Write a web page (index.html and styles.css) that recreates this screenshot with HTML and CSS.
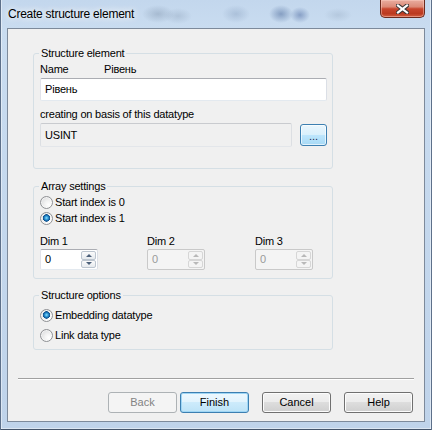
FILE: index.html
```html
<!DOCTYPE html>
<html lang="en">
<head>
<meta charset="utf-8">
<title>Create structure element</title>
<link rel="stylesheet" href="styles.css">
</head>
<body>
<div class="window">
  <div class="titlebar">
    <span class="title">Create structure element</span>
    <button class="close" aria-label="Close">
      <svg width="13" height="10" viewBox="0 0 13 10">
        <path d="M2 1.5 L11 8.5 M11 1.5 L2 8.5" stroke="#3a3535" stroke-width="4.2" stroke-linecap="square" fill="none"/>
        <path d="M2 1.5 L11 8.5 M11 1.5 L2 8.5" stroke="#ffffff" stroke-width="2.2" stroke-linecap="square" fill="none"/>
      </svg>
    </button>
  </div>
  <div class="client">
    <fieldset class="group g1">
      <legend>Structure element</legend>
      <div class="name-row"><span class="name-lbl">Name</span><span>Рівень</span></div>
      <div class="textbox">Рівень</div>
      <div class="basis-lbl">creating on basis of this datatype</div>
      <div class="basis-row">
        <div class="textbox readonly">USINT</div>
        <button class="btn-dots">...</button>
      </div>
    </fieldset>

    <fieldset class="group g2">
      <legend>Array settings</legend>
      <div class="radio"><span class="rb"></span>Start index is 0</div>
      <div class="radio"><span class="rb checked"></span>Start index is 1</div>
      <div class="dims">
        <div class="dim">
          <div class="dim-lbl">Dim 1</div>
          <div class="spin"><span class="val">0</span><span class="arrows"><span class="arr up"></span><span class="arr down"></span></span></div>
        </div>
        <div class="dim">
          <div class="dim-lbl">Dim 2</div>
          <div class="spin disabled"><span class="val">0</span><span class="arrows"><span class="arr up"></span><span class="arr down"></span></span></div>
        </div>
        <div class="dim">
          <div class="dim-lbl">Dim 3</div>
          <div class="spin disabled"><span class="val">0</span><span class="arrows"><span class="arr up"></span><span class="arr down"></span></span></div>
        </div>
      </div>
    </fieldset>

    <fieldset class="group g3">
      <legend>Structure options</legend>
      <div class="radio"><span class="rb checked"></span>Embedding datatype</div>
      <div class="radio second"><span class="rb"></span>Link data type</div>
    </fieldset>

    <div class="sep"></div>

    <div class="buttons">
      <button class="btn back" disabled>Back</button>
      <button class="btn finish">Finish</button>
      <button class="btn">Cancel</button>
      <button class="btn">Help</button>
    </div>
  </div>
</div>
</body>
</html>
```

FILE: styles.css
```css
* { box-sizing: border-box; }
html, body { margin: 0; padding: 0; }
body {
  width: 432px;
  height: 430px;
  overflow: hidden;
  font-family: "Liberation Sans", Arial, sans-serif;
  font-size: 11px;
  line-height: 13px;
  letter-spacing: -0.2px;
  color: #000;
  background: #bcd1e9;
}

.window {
  width: 432px;
  height: 430px;
  display: flex;
  flex-direction: column;
  background:
    radial-gradient(ellipse 16px 9px at 158px 14px, rgba(120,140,165,.40), transparent),
    radial-gradient(ellipse 14px 8px at 178px 16px, rgba(130,150,175,.32), transparent),
    radial-gradient(ellipse 14px 9px at 236px 14px, rgba(110,135,170,.30), transparent),
    radial-gradient(ellipse 12px 9px at 281px 14px, rgba(70,100,150,.50), transparent),
    radial-gradient(ellipse 10px 8px at 300px 15px, rgba(60,90,150,.45), transparent),
    radial-gradient(ellipse 14px 7px at 338px 15px, rgba(140,160,185,.30), transparent),
    linear-gradient(180deg, #c3d7ed 0, #c9dcf0 28px, #bfd3ea 100%);
  box-shadow:
    inset 1px 0 0 #5d708a,
    inset -1px 0 0 #5d708a,
    inset 0 -1px 0 #44546a,
    inset 2px 0 0 rgba(255,255,255,.45),
    inset -2px 0 0 rgba(255,255,255,.45),
    inset 0 -2px 0 rgba(255,255,255,.45);
}

.titlebar {
  height: 28px;
  display: flex;
  justify-content: space-between;
  align-items: flex-start;
  padding: 0 7px 0 8px;
}
.title {
  font-size: 12px;
  line-height: 14px;
  letter-spacing: -0.25px;
  padding-top: 7px;
  text-shadow: 0 0 6px #fff, 0 0 10px rgba(255,255,255,.85);
}
.close {
  width: 45px;
  height: 18px;
  padding: 0;
  border: 1px solid #6b2a1e;
  border-top: none;
  border-radius: 0 0 5px 5px;
  background: linear-gradient(180deg, #e9ad9f 0%, #dc8a77 40%, #c8462d 52%, #bb3a20 80%, #d25e40 100%);
  box-shadow: inset 0 0 0 1px rgba(255,210,200,.45);
  display: flex;
  align-items: center;
  justify-content: center;
}
.close svg { display: block; }

.client {
  margin: 0 7px;
  height: 394px;
  border: 1px solid #7d8a9b;
  background: #f0f0f0;
  display: flex;
  flex-direction: column;
}

.group {
  width: 300px;
  min-width: 0;
  margin: 0 0 0 25px;
  border: 1px solid #d5dfe5;
  border-radius: 3px;
}
.group legend {
  padding: 0 2px;
  margin-left: -1px;
  line-height: 13px;
}
.g1 { margin-top: 18px; padding: 3px 5px 21px 6px; }
.g2 { margin-top: 11px; padding: 1px 5px 8px 6px; }
.g3 { margin-top: 10px; padding: 5px 5px 6px 6px; }

.name-row { display: flex; height: 13px; }
.name-lbl { width: 64px; }

.textbox {
  height: 23px;
  margin-top: 2px;
  border: 1px solid;
  border-color: #abadb3 #dbdfe6 #e3e9ef #e2e3ea;
  border-radius: 2px;
  background: #fff;
  display: flex;
  align-items: center;
  padding: 0 4px;
}
.basis-lbl { margin-top: 7px; }
.basis-row {
  margin-top: 2px;
  display: flex;
  align-items: center;
  justify-content: space-between;
}
.textbox.readonly {
  width: 252px;
  height: 24px;
  margin-top: 0;
  background: #f0f0f0;
  border-color: #c9cbcf #dcdfe3 #e3e6ea #dcdfe3;
}
.btn-dots {
  width: 27px;
  height: 22px;
  padding: 0 0 2px;
  font: inherit;
  font-size: 11px;
  color: #1e2a50;
  border: 1px solid #3c7fb1;
  border-radius: 3px;
  background: linear-gradient(180deg, #eaf6fd 0%, #d9f0fc 50%, #bee6fd 50%, #a7d9f5 100%);
  box-shadow: inset 0 0 0 1px rgba(255,255,255,.65);
  display: flex;
  align-items: flex-end;
  justify-content: center;
  line-height: 13px;
}

.radio {
  height: 16px;
  display: flex;
  align-items: center;
}
.g3 .radio.second { margin-top: 4px; }
.rb {
  width: 13px;
  height: 13px;
  margin-right: 2px;
  border-radius: 50%;
  border: 1px solid #8f9194;
  background: radial-gradient(circle at 70% 70%, #ffffff 0, #f3f3f3 35%, #d2d3d5 100%);
  box-shadow: inset 0 0 0 1px rgba(255,255,255,.6);
  flex: none;
}
.rb.checked {
  background:
    radial-gradient(circle at 50% 45%, #8fe0fb 0, #3da6e0 1.4px, #1a6fb2 2.6px, #0d4c86 3.5px, transparent 3.9px),
    radial-gradient(circle at 70% 70%, #ffffff 0, #f3f3f3 35%, #d2d3d5 100%);
}

.dims {
  display: grid;
  grid-template-columns: 107px 108px 58px;
  margin-top: 9px;
}
.dim-lbl { height: 13px; }
.spin {
  margin-top: 1px;
  width: 58px;
  height: 21px;
  border: 1px solid;
  border-color: #abadb3 #dbdfe6 #e3e9ef #e2e3ea;
  border-radius: 2px;
  background: #fff;
  display: flex;
  align-items: stretch;
  padding: 1px 1px 1px 4px;
}
.spin .val { flex: 1; display: flex; align-items: center; }
.spin .arrows {
  width: 15px;
  display: flex;
  flex-direction: column;
}
.arr {
  flex: 1;
  border: 1px solid #bcc5cf;
  border-radius: 2px;
  background: linear-gradient(180deg, #fbfbfb, #e6eaee);
  display: flex;
  align-items: center;
  justify-content: center;
}
.arr::before {
  content: "";
  border-left: 3px solid transparent;
  border-right: 3px solid transparent;
}
.up::before { border-bottom: 3px solid #4c607a; }
.down::before { border-top: 3px solid #4c607a; }

.spin.disabled {
  background: #f4f4f4;
  border-color: #c9c9c9;
  color: #9a9a9a;
}
.spin.disabled .arr {
  border-color: #d6d6d6;
  background: #f4f4f4;
}
.spin.disabled .up::before { border-bottom-color: #b8b8b8; }
.spin.disabled .down::before { border-top-color: #b8b8b8; }

.sep {
  margin: 28px 0 0 10px;
  width: 396px;
  height: 2px;
  border-top: 1px solid #a0a0a0;
  border-bottom: 1px solid #ffffff;
}

.buttons {
  margin-top: 12px;
  display: flex;
  justify-content: flex-end;
  padding-right: 11px;
}
.btn {
  width: 69px;
  height: 21px;
  margin-left: 13px;
  padding: 0;
  font: inherit;
  font-size: 11px;
  color: #000;
  border: 1px solid #707070;
  border-radius: 3px;
  background: linear-gradient(180deg, #f2f2f2 0%, #ebebeb 50%, #dddddd 50%, #cfcfcf 100%);
  box-shadow: inset 0 0 0 1px #fcfcfc;
}
.btn.back {
  margin-left: 0;
  color: #838383;
  border-color: #adb2b5;
  background: #f4f4f4;
  box-shadow: none;
}
.btn.finish {
  margin-left: 3px;
  border-color: #3c7fb1;
  background: linear-gradient(180deg, #eef8fe 0%, #e1f3fd 50%, #cdebfb 50%, #bde3f7 100%);
  box-shadow: inset 0 0 0 1px #9fd6f5;
}
```
